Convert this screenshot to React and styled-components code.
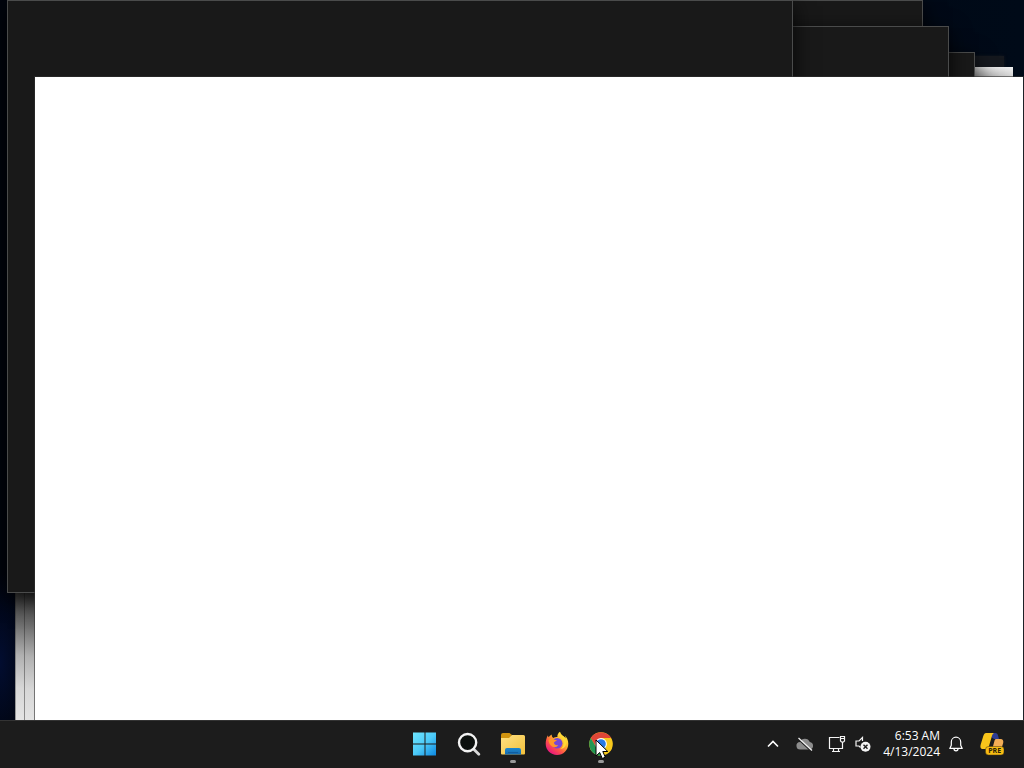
import styled, { createGlobalStyle } from 'styled-components';

const GlobalStyle = createGlobalStyle`
  * {
    box-sizing: border-box;
  }

  body {
    margin: 0;
    overflow: hidden;
    background: #000;
    font-family: 'Open Sans', 'Noto Sans', sans-serif;
  }
`;

const Screen = styled.div`
  display: flex;
  flex-direction: column;
  height: 100vh;
`;

const Desktop = styled.main`
  position: relative;
  flex: 1;
  overflow: hidden;
  background:
    radial-gradient(ellipse 30px 90px at 0 92%, #020d30, transparent),
    linear-gradient(90deg, #01040d, #000a18);
`;

const DarkWindow = styled.section`
  position: absolute;
  top: ${props => props.$top}px;
  left: ${props => props.$left}px;
  right: ${props => props.$right}px;
  bottom: ${props => props.$bottom || 0}px;
  background: #191919;
  border: 1px solid #4a4b4b;
  box-shadow: 0 6px 20px rgba(0, 0, 0, 0.8);
`;

const FadedWindow = styled.section`
  position: absolute;
  top: 56px;
  left: 500px;
  right: 20px;
  height: 60px;
  background: #15181e;
  box-shadow: 0 0 3px #15181e;
`;

const PaleWindow = styled.section`
  position: absolute;
  top: 67px;
  left: ${props => props.$left}px;
  right: 11px;
  bottom: 0;
  background: #e4e4e4;
  border-left: 1px solid ${props => props.$edge};
`;

const TopShade = styled.div`
  height: 10px;
  background: linear-gradient(90deg, transparent 97%, rgba(255, 255, 255, 0.5)), linear-gradient(#e2e2e2, #a4a4a4);
`;

const SideShade = styled.div`
  position: absolute;
  left: 15px;
  bottom: 0;
  width: 20px;
  height: 128px;
  background: linear-gradient(
    188deg,
    rgba(20, 20, 20, 0.85),
    rgba(40, 40, 40, 0.65) 25%,
    rgba(80, 80, 80, 0.35) 50%,
    rgba(120, 120, 120, 0.12) 75%,
    transparent
  );
`;

const BlankWindow = styled.section`
  position: absolute;
  top: 77px;
  left: 35px;
  right: 1px;
  bottom: 0;
  background: #fff;
  box-shadow: 0 0 0 1px rgba(48, 48, 48, 0.6);
`;

const Taskbar = styled.footer`
  display: grid;
  grid-template-columns: 1fr auto 1fr;
  align-items: center;
  height: 48px;
  background: #1c1c1c;
  border-top: 1px solid #333;
`;

const Apps = styled.nav`
  grid-column: 2;
  display: flex;
`;

const AppButton = styled.button`
  position: relative;
  display: grid;
  place-items: center;
  width: 44px;
  height: 47px;
  padding: 0 0 2px 1px;
  border: none;
  background: transparent;

  &::after {
    content: '';
    display: ${props => (props.$running ? 'block' : 'none')};
    position: absolute;
    bottom: 5px;
    left: 20px;
    width: 6px;
    height: 3px;
    border-radius: 2px;
    background: #9a9a9a;
  }
`;

const Pointer = styled.svg`
  position: absolute;
  top: 18px;
  left: 17px;
`;

const Tray = styled.div`
  display: flex;
  justify-content: flex-end;
  align-items: center;
  padding: 0 12px 2px 0;
`;

const TrayButton = styled.button`
  display: grid;
  place-items: center;
  width: ${props => props.$width}px;
  height: 40px;
  padding: 0;
  border: none;
  background: transparent;
`;

const Clock = styled.button`
  display: flex;
  flex-direction: column;
  align-items: flex-end;
  padding: 0;
  margin-left: 10px;
  border: none;
  background: transparent;
  color: #fff;
  font-family: inherit;
  font-size: 12px;
  line-height: 16px;
  white-space: nowrap;
`;

const StartIcon = () => (
    <svg width="24" height="24" viewBox="0 0 24 24">
        <defs>
            <linearGradient id="start" x1="0" y1="0" x2="24" y2="24" gradientUnits="userSpaceOnUse">
                <stop offset="0" stopColor="#6fe6ff" />
                <stop offset="0.5" stopColor="#4ccaf8" />
                <stop offset="1" stopColor="#0883e0" />
            </linearGradient>
        </defs>
        <path fill="url(#start)" d="M0 .5h11.500v11H0zM12.500.5H23v11H12.500zM0 12.500h11.500v11H0zM12.500 12.500H23v11H12.500z" />
    </svg>
);

const SearchIcon = () => (
    <svg width="24" height="24" viewBox="0 0 24 24" fill="none">
        <path d="M16.800 17.300 21.800 22.300" stroke="#d8d8d8" strokeWidth="2.800" strokeLinecap="round" />
        <circle cx="10.600" cy="10.600" r="8.600" fill="#0c100e" stroke="#f3f3f3" strokeWidth="2.400" />
    </svg>
);

const FolderIcon = () => (
    <svg width="26" height="24" viewBox="0 0 26 24">
        <defs>
            <linearGradient id="folder" x1="0" y1="0" x2="1" y2="1">
                <stop offset="0" stopColor="#ffe183" />
                <stop offset="1" stopColor="#f2c03c" />
            </linearGradient>
            <linearGradient id="pocket" x1="0" y1="0" x2="0" y2="1">
                <stop offset="0" stopColor="#1c87d0" />
                <stop offset="1" stopColor="#1769ab" />
            </linearGradient>
        </defs>
        <path fill="#d0930f" d="M1 3a2 2 0 0 1 2-2h6.500l2.500 2-2.500 4H1z" />
        <path fill="url(#folder)" d="M1 6h8l3-3h11.500A1.500 1.500 0 0 1 25 4.500V21.500a1 1 0 0 1-1 1H2a1 1 0 0 1-1-1z" />
        <path fill="url(#pocket)" d="M5 22.500V18a2 2 0 0 1 2-2h12a2 2 0 0 1 2 2v4.500z" />
        <path fill="#105d9f" d="M8 20h10v1H8z" />
    </svg>
);

const FirefoxIcon = () => (
    <svg width="24" height="25" viewBox="0 0 24 25">
        <defs>
            <linearGradient id="fire" x1="20" y1="3" x2="5" y2="22" gradientUnits="userSpaceOnUse">
                <stop offset="0" stopColor="#fff04a" />
                <stop offset="0.350" stopColor="#ffb52b" />
                <stop offset="0.650" stopColor="#ff5845" />
                <stop offset="1" stopColor="#e9157f" />
            </linearGradient>
        </defs>
        <path
            fill="url(#fire)"
            d="M15 .7c-2 1.300-2.800 3.300-2.600 5.200-1.500 0-3 .3-4.100 1.100C7.100 6.300 6.600 4.800 6.800 3.500 5.400 4.200 4.300 5.200 3.600 6.300 3.100 5.800 3 5 3 4.300 1.500 6.500.7 9.600.7 12.800c0 6.300 5 11.200 11.300 11.200s11.300-5 11.300-11.300c0-3.300-1.500-6.400-3.300-8 .4 1 .6 1.900.6 2.800C19.300 4.700 15.400 4.200 15 .7z"
        />
        <circle cx="12.200" cy="12.200" r="5.200" fill="#7547d6" />
        <path fill="#ff9628" d="M3.500 9c1.700-1.500 4-1.500 5.300-.8.8.7 1.800.8 3 .9-.1 1.200-2.400 1.500-2.900 2.700.3 2.200 2.400 2.600 4.100 2.200-.9 2.400-4.400 3.200-6.700.8C4.800 13.500 3.500 11 3.500 9z" />
        <path fill="#ffd934" d="M15 .7c-1.200 4 2.400 5.800 3.500 9.800.6 3.600-1 6.300-3.600 7.700 5.200-.5 7.400-5 6.400-9.200C20.300 5.600 15.700 4.800 15 .7z" />
    </svg>
);

const ChromeIcon = () => (
    <svg width="24" height="24" viewBox="0 0 24 24">
        <circle cx="12" cy="12" r="11.800" fill="#f8c91c" />
        <path fill="#df4637" d="M1.800 6.100A11.800 11.800 0 0 1 22.200 6.100H12L7 15z" />
        <path fill="#219653" d="M1.800 6.100A11.800 11.800 0 0 0 12 23.800L17.100 14.900H6.900z" />
        <circle cx="12" cy="12" r="5.900" fill="#fff" />
        <circle cx="12" cy="12" r="4.800" fill="#287ae4" />
    </svg>
);

const ChevronIcon = () => (
    <svg width="14" height="14" viewBox="0 0 14 14" fill="none">
        <path d="m2 9.500 5-5 5 5" stroke="#fff" strokeWidth="1.600" />
    </svg>
);

const CloudIcon = () => (
    <svg width="18" height="16" viewBox="0 0 18 16">
        <path fill="#8c8c8c" d="M4.500 13.500A3.800 3.800 0 0 1 4 5.900 5.300 5.300 0 0 1 13.800 6 3.800 3.800 0 0 1 13.900 13.500z" />
        <path d="m2.500 3.500 12.500 11.500" stroke="#1c1c1c" strokeWidth="1.200" />
        <path d="m2.500 2 13.500 12.500" stroke="#f0f0f0" strokeWidth="1.300" />
    </svg>
);

const NetworkIcon = () => (
    <svg width="18" height="18" viewBox="0 0 18 18" fill="none" stroke="#f4f4f4" strokeWidth="1.200">
        <path d="M11.500 2.500H1.500v11h13M5.500 13.500v3M10.500 13.500v3M4 16.500h8" />
        <path d="M12.500 1.500h4v4.500l-1 1h-2l-1-1zM12.500 3.500h4M14.500 7v7" />
    </svg>
);

const MutedIcon = () => (
    <svg width="18" height="18" viewBox="0 0 18 18" fill="none" stroke="#f4f4f4" strokeWidth="1.200">
        <path d="M8.500 6V2.500L5 6H2v5h3l1.500 1.500" />
        <circle cx="11.500" cy="11.700" r="5" fill="#f4f4f4" stroke="none" />
        <path d="m9.500 9.700 4 4m0-4-4 4" stroke="#1c1c1c" strokeWidth="1.400" />
    </svg>
);

const BellIcon = () => (
    <svg width="16" height="18" viewBox="0 0 16 18" fill="none" stroke="#fff" strokeWidth="1.200">
        <path d="M8 2.200a4.700 4.700 0 0 0-4.700 4.700v3.300L1.800 13.400h12.400l-1.500-3.200V6.900A4.700 4.700 0 0 0 8 2.200z" strokeLinejoin="round" />
        <path d="M6 13.800a2 2 0 0 0 4 0" />
    </svg>
);

const CopilotIcon = () => (
    <svg width="24" height="24" viewBox="0 0 24 24">
        <path fill="#2e3c93" d="M11 1h4.500a2.500 2.500 0 0 1 2.300 1.700L19 7h-5l-4-3z" />
        <path fill="#f9c51b" d="M6 1h8c-1.500.8-2 2.500-2.500 4.500L9 14c-.8 2.500-1.700 3-3.500 3H3c-2.500 0-3-2-2.300-4.500L3.300 4C4 2 4.800 1 6 1z" />
        <path fill="#f3ad56" d="M16 7h4.500c2.500 0 3.200 1.800 2.700 4L21 18h-9l2.300-8.500C14.700 8 15 7 16 7z" />
        <rect x="5.500" y="14.500" width="18.500" height="8.500" rx="3" fill="#f7bc13" stroke="#4a3a10" strokeWidth="0.500" />
        <text x="14.700" y="21.300" textAnchor="middle" fontFamily="Open Sans, sans-serif" fontSize="7" fontWeight="700" fill="#2b2105">PRE</text>
    </svg>
);

const App = () => {
    return (
        <Screen>
            <GlobalStyle />
            <Desktop>
                <FadedWindow />
                <PaleWindow $left={15} $edge="#999">
                    <TopShade />
                </PaleWindow>
                <PaleWindow $left={24} $edge="#8c8c8c">
                    <TopShade />
                </PaleWindow>
                <SideShade />
                <DarkWindow $top={52} $left={300} $right={49} />
                <DarkWindow $top={0} $left={200} $right={101} />
                <DarkWindow $top={26} $left={250} $right={75} />
                <DarkWindow $top={0} $left={7} $right={231} $bottom={127} />
                <BlankWindow />
            </Desktop>
            <Taskbar>
                <Apps>
                    <AppButton aria-label="Start"><StartIcon /></AppButton>
                    <AppButton aria-label="Search"><SearchIcon /></AppButton>
                    <AppButton aria-label="File Explorer" $running><FolderIcon /></AppButton>
                    <AppButton aria-label="Firefox"><FirefoxIcon /></AppButton>
                    <AppButton aria-label="Google Chrome" $running>
                        <ChromeIcon />
                        <Pointer width="14" height="21" viewBox="0 0 14 21">
                            <path d="M1 1v16l3.700-3.500L7.300 19.500l3-1.300L7.800 12.500H12.800z" fill="#fff" stroke="#000" strokeWidth="1" />
                        </Pointer>
                    </AppButton>
                </Apps>
                <Tray>
                    <TrayButton $width={32} aria-label="Show hidden icons"><ChevronIcon /></TrayButton>
                    <TrayButton $width={32} aria-label="OneDrive"><CloudIcon /></TrayButton>
                    <TrayButton $width={32} aria-label="Network"><NetworkIcon /></TrayButton>
                    <TrayButton $width={20} aria-label="Volume"><MutedIcon /></TrayButton>
                    <Clock>
                        <span>6:53 AM</span>
                        <span>4/13/2024</span>
                    </Clock>
                    <TrayButton $width={32} aria-label="Notifications"><BellIcon /></TrayButton>
                    <TrayButton $width={40} aria-label="Copilot"><CopilotIcon /></TrayButton>
                </Tray>
            </Taskbar>
        </Screen>
    );
};

export default App;
